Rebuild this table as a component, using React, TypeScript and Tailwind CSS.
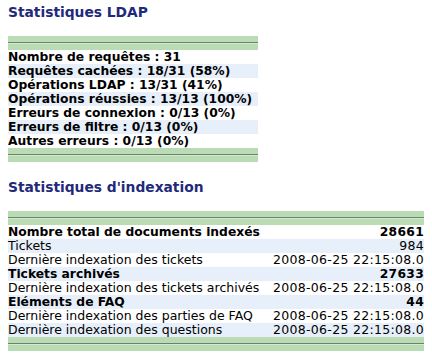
const ldapRows = [
  "Nombre de requêtes : 31",
  "Requêtes cachées : 18/31 (58%)",
  "Opérations LDAP : 13/31 (41%)",
  "Opérations réussies : 13/13 (100%)",
  "Erreurs de connexion : 0/13 (0%)",
  "Erreurs de filtre : 0/13 (0%)",
  "Autres erreurs : 0/13 (0%)",
];

const indexRows: { label: string; value: string; bold?: boolean }[] = [
  { label: "Nombre total de documents indexés", value: "28661", bold: true },
  { label: "Tickets", value: "984", bold: false },
  { label: "Dernière indexation des tickets", value: "2008-06-25 22:15:08.0" },
  { label: "Tickets archivés", value: "27633", bold: true },
  { label: "Dernière indexation des tickets archivés", value: "2008-06-25 22:15:08.0" },
  { label: "Eléments de FAQ", value: "44", bold: true },
  { label: "Dernière indexation des parties de FAQ", value: "2008-06-25 22:15:08.0" },
  { label: "Dernière indexation des questions", value: "2008-06-25 22:15:08.0" },
];

function Band() {
  return (
    <div className="bg-[#b9dcb4] py-[6px]">
      <div className="h-[2px] border-t border-b border-t-[#6f7f6f] border-b-[#d4e9d0]" />
    </div>
  );
}

export default function App() {
  return (
    <div className="min-h-screen bg-white px-2 pt-[3px] text-black" style={{ fontFamily: '"DejaVu Sans", Verdana, sans-serif' }}>
      <h2 className="text-[13.8px] font-bold leading-[18px] text-[#1f2a7a]">Statistiques LDAP</h2>
      <div className="mt-[15px] w-fit">
        <Band />
        {ldapRows.map((row, i) => (
          <div key={row} className={`pr-[6px] text-[12.3px] font-bold leading-[14px] ${i % 2 === 1 ? "bg-[#e6effa]" : "bg-white"}`}>
            {row}
          </div>
        ))}
        <Band />
      </div>

      <h2 className="mt-[16px] text-[13.8px] font-bold leading-[18px] text-[#1f2a7a]">Statistiques d&apos;indexation</h2>
      <div className="mt-[15px]">
        <Band />
        {indexRows.map((row, i) => (
          <div
            key={row.label}
            className={`flex justify-between leading-[14px] ${row.bold ? "text-[12.3px] font-bold" : "text-[12.5px]"} ${i % 2 === 1 ? "bg-[#e6effa]" : "bg-white"}`}
          >
            <span>{row.label}</span>
            <span className="tracking-[0.3px]">{row.value}</span>
          </div>
        ))}
        <Band />
      </div>
    </div>
  );
}
